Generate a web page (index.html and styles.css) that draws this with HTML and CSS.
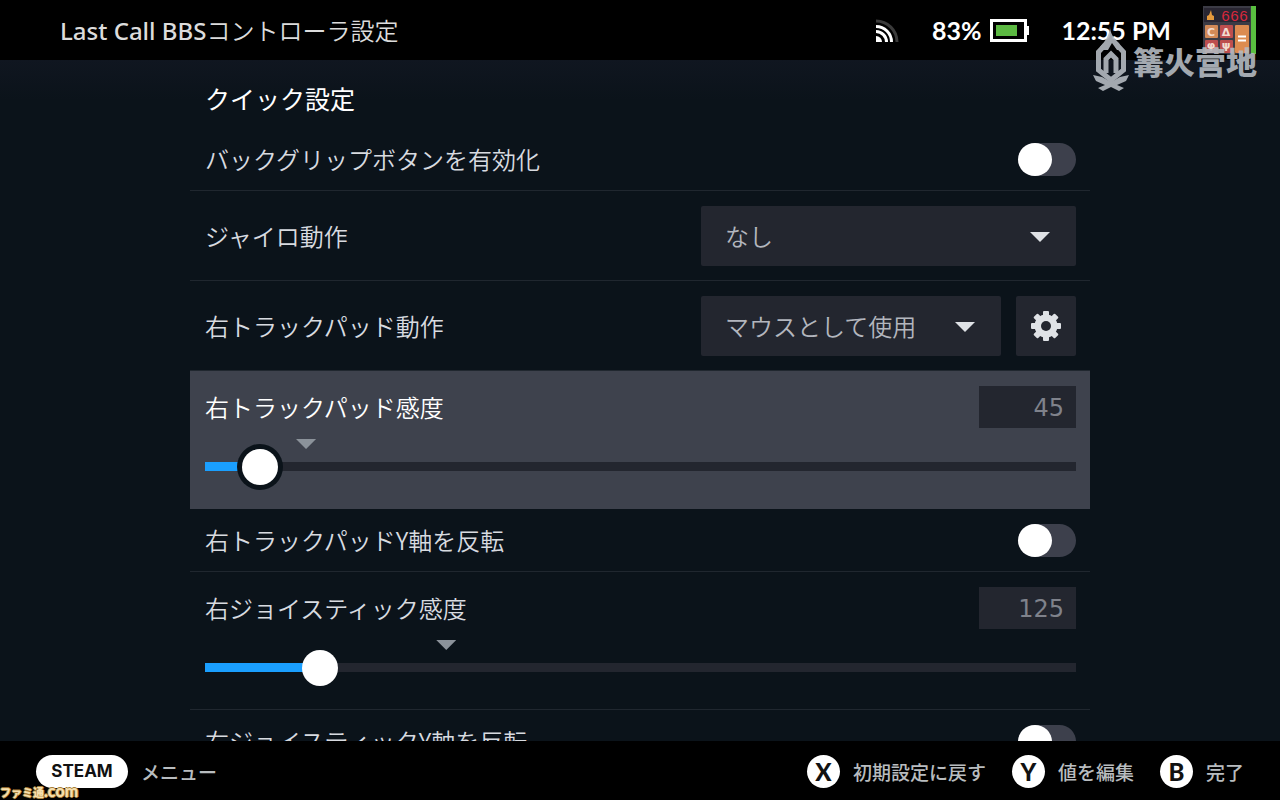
FILE: index.html
```html
<!DOCTYPE html>
<html lang="ja">
<head>
    <meta charset="UTF-8">
    <meta name="viewport" content="width=device-width, initial-scale=1.0">
    <title>Last Call BBS コントローラ設定</title>
    <link rel="stylesheet" href="styles.css">
</head>
<body>

    <!-- Top bar -->
    <header class="topbar">
        <h1 class="title"><span class="game">Last Call BBS</span>コントローラ設定</h1>
        <div class="status">
            <svg class="wifi" width="24" height="24" viewBox="0 0 24 24" fill="none" stroke="#fff" stroke-width="3">
                <path d="M0 24V18A6 6 0 0 1 6 24Z" fill="#fff" stroke="none"/>
                <path d="M0 13.5A10.5 10.5 0 0 1 10.5 24"/>
                <path d="M0 8.5A15.5 15.5 0 0 1 15.5 24"/>
                <path d="M0 3A21 21 0 0 1 21 24" stroke="#3b3b3b"/>
            </svg>
            <span class="battery">83%
                <svg width="39" height="24" viewBox="0 0 39 24">
                    <rect x="1.5" y="2.5" width="34" height="20" fill="none" stroke="#fff" stroke-width="3"/>
                    <rect x="37" y="8" width="2" height="9" fill="#fff"/>
                    <rect x="6" y="7" width="21" height="11" fill="#5cb942"/>
                </svg>
            </span>
            <time class="clock">12:55 PM</time>
            <svg class="avatar" width="53" height="48" viewBox="0 0 53 48">
                <rect width="48" height="48" fill="#3b3b45"/>
                <rect x="1" y="2" width="46" height="14" fill="#292632"/>
                <path d="M4 14V10L6 9L8 4L9 9L11 10V14Z" fill="#e69a3c"/>
                <text x="18" y="15" class="avatar-digits">666</text>
                <rect x="2" y="19" width="13" height="13" rx="1" fill="#d28a57"/>
                <rect x="17" y="19" width="13" height="13" rx="1" fill="#bd4e4e"/>
                <rect x="2" y="34" width="13" height="13" rx="1" fill="#bd4e4e"/>
                <rect x="17" y="34" width="13" height="13" rx="1" fill="#bd4e4e"/>
                <rect x="32" y="19" width="14" height="28" rx="1" fill="#dd8c50"/>
                <text x="8" y="30" class="avatar-key">C</text>
                <text x="23" y="30" class="avatar-key">Δ</text>
                <text x="8" y="43" class="avatar-key">φ</text>
                <text x="23" y="43" class="avatar-key">ψ</text>
                <path d="M35 30.5H43M35 34.5H43" stroke="#fff" stroke-width="2"/>
                <rect x="48" width="5" height="48" fill="#59bf40"/>
            </svg>
        </div>
        <div class="camp-mark">
            <svg width="36" height="66" viewBox="0 0 36 66">
                <path d="M17 0C17 8 21 12 26 17L29 24L24 24L19 17L15 24L7 24L7 21C13 14 17 8 17 0Z"/>
                <path class="camp-line" d="M12 19L5.5 26V44L18 54L30.500 44V26L24 19"/>
                <path class="camp-line" d="M13 47V33L18 28L23 33V47"/>
                <path d="M0 49L9 51L18 56L27 51L36 49L33 55L24 59L31 62L26 65L18 61L10 65L5 62L12 59L3 55Z"/>
            </svg>
            <span>篝火营地</span>
        </div>
    </header>

    <!-- Settings list -->
    <main class="content">
        <section class="settings">
            <h2 class="section-title">クイック設定</h2>

            <div class="row">
                <label for="back-grip">バックグリップボタンを有効化</label>
                <input id="back-grip" class="toggle" type="checkbox">
            </div>

            <div class="row">
                <label for="gyro">ジャイロ動作</label>
                <div class="dropdown dropdown-wide">
                    <select id="gyro">
                        <option>なし</option>
                    </select>
                </div>
            </div>

            <div class="row">
                <label for="pad-action">右トラックパッド動作</label>
                <div class="controls">
                    <div class="dropdown">
                        <select id="pad-action">
                            <option>マウスとして使用</option>
                        </select>
                    </div>
                    <button class="gear" type="button" aria-label="設定">
                        <svg width="30" height="30" viewBox="-15 -15 30 30">
                            <g fill="#dfe2e6">
                                <rect x="-3" y="-15" width="6" height="30" rx="1"/>
                                <rect x="-3" y="-15" width="6" height="30" rx="1" transform="rotate(45)"/>
                                <rect x="-3" y="-15" width="6" height="30" rx="1" transform="rotate(90)"/>
                                <rect x="-3" y="-15" width="6" height="30" rx="1" transform="rotate(135)"/>
                                <circle r="11.5"/>
                            </g>
                            <circle r="5" fill="#23262f"/>
                        </svg>
                    </button>
                </div>
            </div>

            <div class="row row-slider focused">
                <div class="row-head">
                    <label for="pad-sens">右トラックパッド感度</label>
                    <input class="value" type="text" value="45" aria-label="右トラックパッド感度の値">
                </div>
                <div class="slider">
                    <span class="notch" style="left: 11.6%"></span>
                    <input id="pad-sens" type="range" min="1" max="1000" value="45" style="--fill: 6.3%">
                </div>
            </div>

            <div class="row">
                <label for="pad-invert">右トラックパッドY軸を反転</label>
                <input id="pad-invert" class="toggle" type="checkbox">
            </div>

            <div class="row row-slider">
                <div class="row-head">
                    <label for="stick-sens">右ジョイスティック感度</label>
                    <input class="value" type="text" value="125" aria-label="右ジョイスティック感度の値">
                </div>
                <div class="slider">
                    <span class="notch" style="left: 27.7%"></span>
                    <input id="stick-sens" type="range" min="10" max="1000" value="125" style="--fill: 13.2%">
                </div>
            </div>

            <div class="row">
                <label for="stick-invert">右ジョイスティックY軸を反転</label>
                <input id="stick-invert" class="toggle" type="checkbox">
            </div>
        </section>
    </main>

    <!-- Button hints -->
    <footer class="hints">
        <button class="hint" type="button"><span class="steam">STEAM</span>メニュー</button>
        <div class="hint-group">
            <button class="hint" type="button"><span class="key">X</span>初期設定に戻す</button>
            <button class="hint" type="button"><span class="key">Y</span>値を編集</button>
            <button class="hint" type="button"><span class="key">B</span>完了</button>
        </div>
        <div class="press-mark">ファミ通<span>.com</span></div>
    </footer>

</body>
</html>
```
FILE: styles.css
```css
* {
    box-sizing: border-box;
}
body {
    margin: 0;
    height: 100vh;
    display: flex;
    flex-direction: column;
    background: #0c131b;
    color: #d8dbe0;
    font-family: "Noto Sans CJK JP", sans-serif;
    font-size: 24px;
    font-weight: 350;
    overflow: hidden;
}
button,
input,
select {
    margin: 0;
    border: 0;
    font: inherit;
    color: inherit;
}

/* Top bar */
.topbar {
    position: relative;
    z-index: 1;
    flex: none;
    display: flex;
    justify-content: space-between;
    height: 60px;
    padding: 0 24px 0 60px;
    background: #000;
}
.title {
    margin: 0;
    padding-top: 2px;
    align-self: center;
    font-family: "Noto Sans", "Noto Sans CJK JP", sans-serif;
    font-size: 24px;
    line-height: 36px;
    font-weight: 350;
    color: #dcdcdc;
}
.game {
    font-weight: 500;
}
.status {
    display: flex;
    align-items: center;
    gap: 32px;
    font-family: Lato, sans-serif;
    font-size: 25px;
    font-weight: 700;
    color: #fff;
}
.battery {
    display: flex;
    align-items: center;
    gap: 9px;
}
.avatar-digits {
    font: 15px "Liberation Mono", monospace;
    fill: #d8283c;
}
.avatar-key {
    font: bold 11px "DejaVu Sans", sans-serif;
    fill: #f3dcd0;
    text-anchor: middle;
}
.camp-mark {
    position: absolute;
    top: 26px;
    right: 23px;
    display: flex;
    align-items: center;
    gap: 4px;
    color: #b4bac0;
    fill: #b4bac0;
    opacity: 0.9;
    font-family: "Noto Sans CJK SC", sans-serif;
    font-size: 31px;
    line-height: 36px;
    font-weight: 900;
    pointer-events: none;
}
.camp-mark span {
    padding-top: 3px;
}
.camp-line {
    fill: none;
    stroke: #b4bac0;
    stroke-width: 5;
}

/* Settings list */
.content {
    flex: 1;
    min-height: 0;
    overflow-y: auto;
    scrollbar-width: none;
    background: linear-gradient(#101620, #0b131a 40px);
}
.settings {
    max-width: 900px;
    margin: 0 auto;
}
.section-title {
    margin: 0;
    padding: 20px 15px 12px;
    font-size: 25px;
    line-height: 36px;
    font-weight: 400;
    color: #fff;
}
.row {
    display: flex;
    justify-content: space-between;
    align-items: center;
    padding: 15px 14px 14px 15px;
    border-bottom: 1px solid #20272f;
}
.row label {
    padding-bottom: 2px;
    line-height: 31px;
}
.row-slider {
    display: block;
}
.row-head {
    display: flex;
    justify-content: space-between;
    align-items: center;
}
.focused {
    background: #3e424d;
    border-color: #3e424d;
    color: #fff;
}
.controls {
    display: flex;
    gap: 15px;
}

/* Toggle */
.toggle {
    appearance: none;
    display: flex;
    width: 58px;
    height: 33px;
    border-radius: 17px;
    background: #3d404c;
}
.toggle::before {
    content: "";
    width: 34px;
    height: 33px;
    border-radius: 50%;
    background: #fff;
}
.toggle:checked {
    justify-content: flex-end;
    background: #1a9fff;
}

/* Dropdown */
.dropdown {
    position: relative;
    width: 300px;
}
.dropdown-wide {
    width: 375px;
}
.dropdown select {
    appearance: none;
    display: block;
    width: 100%;
    height: 60px;
    padding: 0 60px 2px 24px;
    border-radius: 2px;
    background: #23262f;
    color: #b3b6be;
}
.dropdown::after {
    content: "";
    position: absolute;
    top: 26px;
    right: 26px;
    width: 20px;
    height: 10px;
    background: #dfe2e6;
    clip-path: polygon(0 0, 100% 0, 50% 100%);
    pointer-events: none;
}
.gear {
    display: flex;
    align-items: center;
    justify-content: center;
    width: 60px;
    height: 60px;
    padding: 0;
    border-radius: 2px;
    background: #23262f;
}

/* Slider */
.value {
    width: 97px;
    height: 42px;
    padding: 2px 12px 0;
    background: #23262f;
    color: #7f828b;
    font-family: "DejaVu Sans", sans-serif;
    font-size: 24px;
    font-weight: 400;
    text-align: right;
}
.slider {
    position: relative;
    padding: 20px 0 10px;
}
.notch {
    position: absolute;
    top: 11px;
    width: 20px;
    height: 10px;
    margin-left: -10px;
    background: #8b929a;
    clip-path: polygon(0 0, 100% 0, 50% 100%);
}
.slider input {
    appearance: none;
    display: block;
    width: 100%;
    height: 36px;
    background: none;
}
.slider input::-webkit-slider-runnable-track {
    height: 9px;
    background: linear-gradient(to right, #1a9fff var(--fill), #23262f var(--fill));
}
.slider input::-webkit-slider-thumb {
    appearance: none;
    width: 36px;
    height: 36px;
    margin-top: -13px;
    border-radius: 50%;
    background: #fff;
}
.focused .slider input::-webkit-slider-thumb {
    box-shadow: 0 0 0 5px #0b131a;
}

/* Button hints */
.hints {
    position: relative;
    flex: none;
    display: flex;
    align-items: center;
    justify-content: space-between;
    height: 59px;
    padding: 1px 36px 0;
    background: #000;
}
.hint-group {
    display: flex;
    gap: 26px;
}
.hint {
    display: flex;
    align-items: center;
    gap: 13px;
    padding: 0;
    background: none;
    color: #b8bcbf;
    font-size: 19px;
    font-weight: 500;
}
.steam,
.key {
    height: 33px;
    line-height: 33px;
    border-radius: 17px;
    background: #fff;
    color: #111;
    text-align: center;
}
.steam {
    width: 92px;
    font-family: Inter, sans-serif;
    font-size: 17px;
    font-weight: 700;
}
.key {
    width: 33px;
    font-family: Lato, sans-serif;
    font-size: 24px;
    font-weight: 900;
}
.press-mark {
    position: absolute;
    left: 0;
    bottom: 0;
    color: #f5dfae;
    font-size: 11px;
    line-height: 15px;
    font-weight: 900;
    text-shadow: 1px 0 #a87f3a, -1px 0 #a87f3a, 0 1px #a87f3a, 0 -1px #a87f3a;
}
.press-mark span {
    font-family: Lato, sans-serif;
    font-size: 16px;
}
```
